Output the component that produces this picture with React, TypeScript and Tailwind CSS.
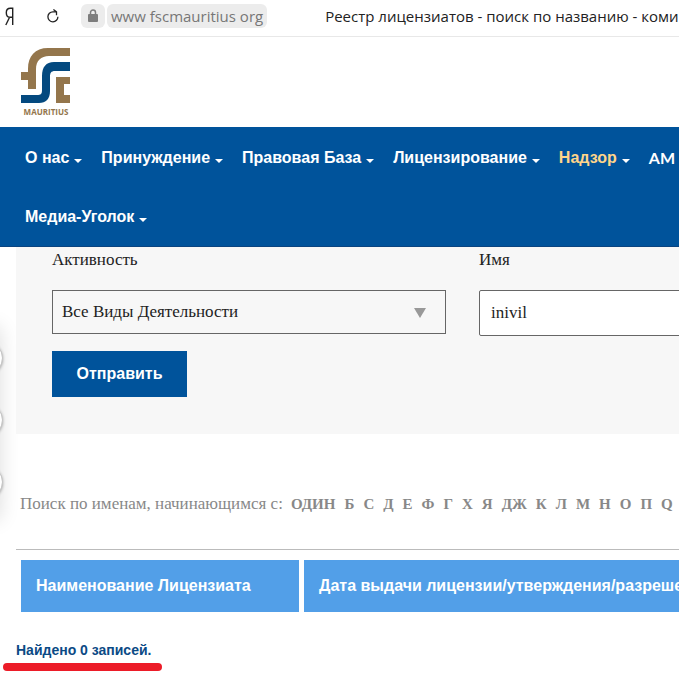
const navRows = [
  [
    { label: 'О нас', menu: true },
    { label: 'Принуждение', menu: true },
    { label: 'Правовая База', menu: true },
    { label: 'Лицензирование', menu: true },
    { label: 'Надзор', menu: true, active: true },
    { label: 'AM' },
  ],
  [{ label: 'Медиа-Уголок', menu: true }],
];

const letters = ['ОДИН', 'Б', 'С', 'Д', 'Е', 'Ф', 'Г', 'Х', 'Я', 'ДЖ', 'К', 'Л', 'М', 'Н', 'О', 'П', 'Q'];

function BrowserBar() {
  return (
    <div className="flex h-[37px] items-center overflow-hidden border-b border-[#e8e8e8] pb-1 font-['Open_Sans',sans-serif] text-[15px] whitespace-nowrap">
      <svg className="ml-1 shrink-0" width="11" height="20" viewBox="0 0 11 20" fill="none" stroke="#222" strokeWidth="1.4">
        <path d="M8.7 19V2.3H6.4C3.8 2.3 2.3 4 2.3 6.7c0 2.700 1.600 4.600 4 4.600h2.400M5.600 11.300 1.800 19" />
      </svg>
      <button aria-label="Обновить" className="ml-8 shrink-0">
        <svg width="12" height="14" viewBox="0 0 12 14" fill="none" stroke="#222" strokeWidth="1.3">
          <path d="M10.900 7.700a5 5 0 1 1-5-4.900h3.600M6.400 0.500l3.100 2.300v3.500" />
        </svg>
      </button>
      <span className="ml-[22px] flex h-6 w-6 shrink-0 items-center justify-center rounded-md bg-[#ececec]">
        <svg width="12" height="14" viewBox="0 0 12 14">
          <rect x="1" y="5" width="10" height="8" rx="1" fill="#7d7d7d" />
          <path d="M3.500 6V3.500a2.500 2.500 0 0 1 5 0V6" fill="none" stroke="#7d7d7d" strokeWidth="1.5" />
        </svg>
      </span>
      <span className="ml-0.5 flex h-6 shrink-0 items-center rounded-md bg-[#ececec] px-1 text-[#777]">www fscmauritius org</span>
      <span className="ml-[58px] text-[#222]">Реестр лицензиатов - поиск по названию - коми</span>
    </div>
  );
}

function Logo() {
  return (
    <a href="#" aria-label="FSC Mauritius" className="block w-[50px]">
      <svg width="50" height="56" viewBox="0 0 50 56">
        <path d="M0 24h7v-3C7 8 14 0 27 0h22v8H28c-8 0-13 5-13 13v20H7v-9H0z" fill="#94764c" />
        <path d="M49 14v9H34c-4 0-5 2-5 6v14c0 8-4 12-11 12H0v-8h16c4 0 5-1 5-5V28c0-9 4-14 12-14z" fill="#04497f" />
        <path d="M35 29h14v7h-6v11h6v8H35z" fill="#94764c" />
      </svg>
      <span className="block text-center font-['Open_Sans',sans-serif] text-[8px] leading-[16px] font-bold text-[#94764c]">MAURITIUS</span>
    </a>
  );
}

function SideTabs() {
  return (
    <div className="absolute top-20 -left-8 h-48 w-8 shadow-[0_0_20px_rgba(0,0,0,0.14)]">
      <div className="flex flex-col gap-[30px] pt-[15px]">
        {[0, 1, 2].map((i) => (
          <div key={i} className="ml-[3px] h-8 w-8 rounded-full border border-[#c4c4c4] bg-white shadow-[0_1px_3px_rgba(0,0,0,0.3)]"></div>
        ))}
      </div>
    </div>
  );
}

export default function App() {
  return (
    <div className="overflow-hidden bg-white font-['Liberation_Sans',sans-serif] text-base">
      <BrowserBar />

      <header>
        <div className="h-[90px] pt-[11px] pl-[21px]">
          <Logo />
        </div>
        <nav className="border-b border-[#0a4480] bg-[#00539b] pl-[25px] font-bold">
          {navRows.map((row, i) => (
            <ul key={i} className="flex h-[60px] items-center gap-[19px] whitespace-nowrap pt-px last:h-[59px]">
              {row.map((item) => (
                <li key={item.label}>
                  <a href="#" className="flex items-center gap-[5px] text-white">
                    <span className={item.active ? 'text-[#ffd58a]' : item.menu ? '' : "font-['Lato',sans-serif]"}>{item.label}</span>
                    {item.menu && (
                      <svg className="mt-1.5" width="8" height="4" viewBox="0 0 8 4" fill="currentColor">
                        <path d="M0 0h8L4 4z" />
                      </svg>
                    )}
                  </a>
                </li>
              ))}
            </ul>
          ))}
        </nav>
      </header>

      <main className="relative pl-4">
        <SideTabs />

        <form className="relative bg-[#f7f7f7] pt-px pb-[37px] pl-9 font-['Liberation_Serif',serif] text-[17px] text-[#222]">
          <div className="flex gap-[33px]">
            <div className="w-[394px] shrink-0">
              <label htmlFor="activity" className="block leading-6">Активность</label>
              <div className="relative mt-[18px]">
                <select id="activity" className="h-11 w-full appearance-none border border-[#666] bg-transparent px-[9px]">
                  <option>Все Виды Деятельности</option>
                </select>
                <svg className="pointer-events-none absolute top-[18px] right-5" width="12" height="10" viewBox="0 0 12 10">
                  <path d="M0 0h12L6 10z" fill="#999" />
                </svg>
              </div>
            </div>
            <div className="w-[394px] shrink-0">
              <label htmlFor="name" className="block leading-6">Имя</label>
              <input id="name" type="text" defaultValue="inivil" className="mt-[18px] block h-[46px] w-full rounded-xs border border-[#666] bg-white px-[11px]" />
            </div>
          </div>
          <button type="button" className="mt-[15px] h-[46px] w-[135px] bg-[#00539b] font-['Liberation_Sans',sans-serif] text-base font-bold text-white">
            Отправить
          </button>
        </form>

        <div className="mt-[58px] flex items-center pl-1 font-['Liberation_Serif',serif] text-[17px] leading-6 whitespace-nowrap text-[#888]">
          <span>Поиск по именам, начинающимся с:</span>
          <div className="ml-2 flex gap-[9px] text-[15px] font-bold">
            {letters.map((letter) => (
              <a key={letter} href="#">{letter}</a>
            ))}
          </div>
        </div>

        <div className="mt-[33px] border-t border-[#bbb] pt-[5px]">
          <table className="border-separate border-spacing-[5px] text-left whitespace-nowrap text-white">
            <thead>
              <tr className="h-[52px] bg-[#529fe8]">
                <th className="w-[278px] min-w-[278px] px-[15px] font-bold">Наименование Лицензиата</th>
                <th className="w-[400px] min-w-[400px] px-[15px] font-bold">Дата выдачи лицензии/утверждения/разреше</th>
              </tr>
            </thead>
          </table>
        </div>

        <div className="pt-[23px] pb-4">
          <p className="text-sm font-bold text-[#0b4a85]">Найдено 0 записей.</p>
          <div className="mt-[3px] -ml-[13px] h-2 w-[159px] rounded-full bg-[#ec1c28]"></div>
        </div>
      </main>
    </div>
  );
}
